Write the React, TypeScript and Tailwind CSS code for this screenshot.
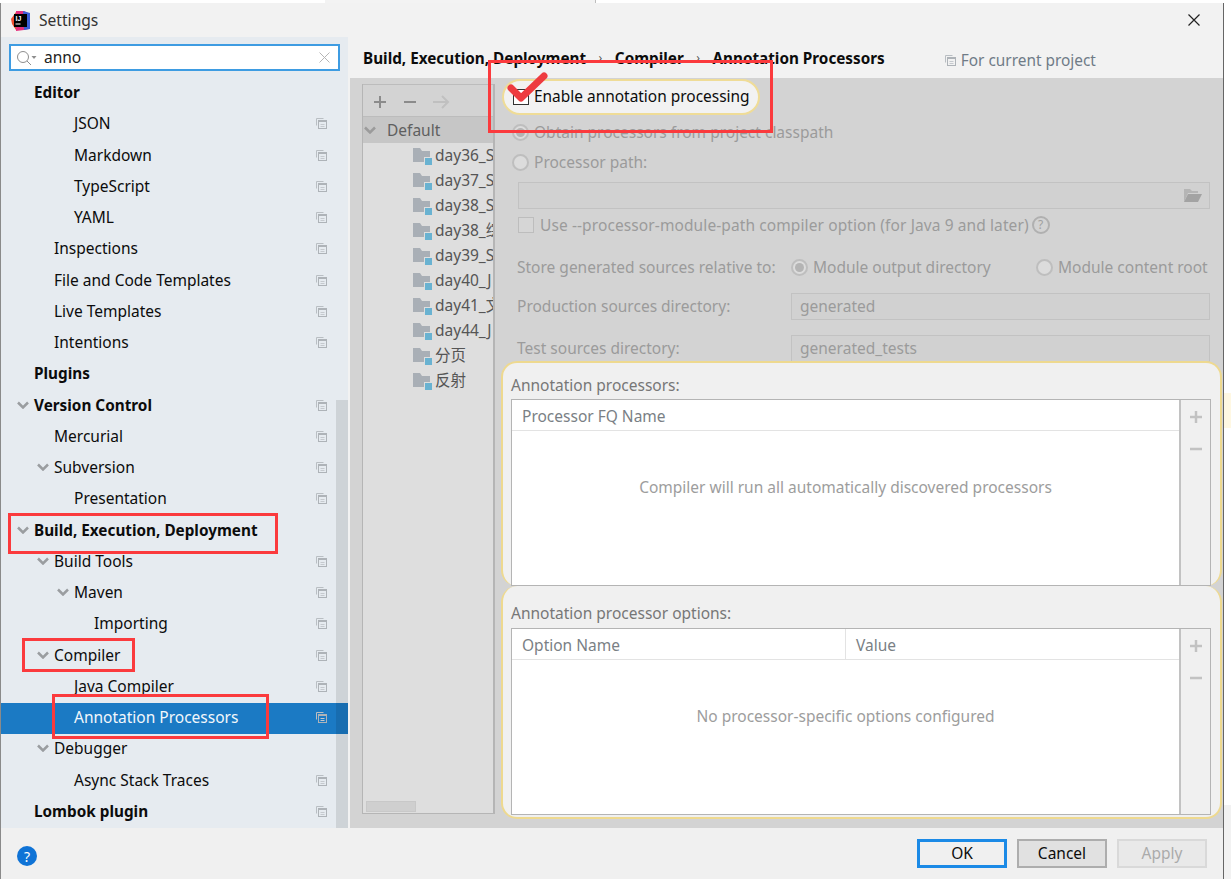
import React from "react";

const font = { fontFamily: '"Noto Sans", "Noto Sans CJK SC", sans-serif' };

function ProjectIcon({ className = "" }: { className?: string }) {
  return (
    <svg width="11" height="11" viewBox="0 0 11 11" className={className} fill="none">
      <path d="M0.5 7.5V0.5H7.5" stroke="#b9bec3" />
      <rect x="2.5" y="2.5" width="8" height="8" stroke="#aeb3b8" />
      <path d="M2.5 3h8" stroke="#aeb3b8" strokeWidth="2" />
      <path d="M4.5 6.5h4M4.5 8.5h4" stroke="#c5c9ce" />
    </svg>
  );
}

function Chevron({ color = "#9a9da0" }: { color?: string }) {
  return (
    <svg width="12" height="8" viewBox="0 0 12 8" fill="none">
      <path d="M1 1.5L6 6.5L11 1.5" stroke={color} strokeWidth="2.5" />
    </svg>
  );
}

type Row = { t: string; l: 0 | 1 | 2 | 3; open?: boolean; bold?: boolean; icon?: boolean; sel?: boolean };

const rows: Row[] = [
  { t: "Editor", l: 0, bold: true },
  { t: "JSON", l: 2, icon: true },
  { t: "Markdown", l: 2, icon: true },
  { t: "TypeScript", l: 2, icon: true },
  { t: "YAML", l: 2, icon: true },
  { t: "Inspections", l: 1, icon: true },
  { t: "File and Code Templates", l: 1, icon: true },
  { t: "Live Templates", l: 1, icon: true },
  { t: "Intentions", l: 1, icon: true },
  { t: "Plugins", l: 0, bold: true },
  { t: "Version Control", l: 0, bold: true, open: true, icon: true },
  { t: "Mercurial", l: 1, icon: true },
  { t: "Subversion", l: 1, open: true, icon: true },
  { t: "Presentation", l: 2, icon: true },
  { t: "Build, Execution, Deployment", l: 0, bold: true, open: true },
  { t: "Build Tools", l: 1, open: true, icon: true },
  { t: "Maven", l: 2, open: true, icon: true },
  { t: "Importing", l: 3, icon: true },
  { t: "Compiler", l: 1, open: true, icon: true },
  { t: "Java Compiler", l: 2, icon: true },
  { t: "Annotation Processors", l: 2, icon: true, sel: true },
  { t: "Debugger", l: 1, open: true },
  { t: "Async Stack Traces", l: 2, icon: true },
  { t: "Lombok plugin", l: 0, bold: true, icon: true },
];

const indent = { 0: "pl-[16px]", 1: "pl-[36px]", 2: "pl-[56px]", 3: "pl-[76px]" };

function SideRow({ r }: { r: Row }) {
  return (
    <div
      className={`flex h-[31.25px] items-center ${indent[r.l]} ${r.sel ? "bg-[#1b7ac4] text-[#f2f7fb]" : "text-[#0c0c0c]"} ${r.bold ? "text-[15.3px] font-bold" : "text-[15.5px]"}`}
    >
      <span className="flex w-[17px] shrink-0 items-center pb-[3px]">{r.open ? <Chevron /> : null}</span>
      <span className="whitespace-nowrap pb-[2px]">{r.t}</span>
      {r.icon ? <ProjectIcon className="ml-auto mb-[2px] mr-[21px] shrink-0" /> : null}
    </div>
  );
}

function Radio({ on }: { on?: boolean }) {
  return (
    <span className="flex h-[17px] w-[17px] shrink-0 items-center justify-center rounded-full border-2 border-[#bebebe] bg-[#dcdcdc]">
      {on ? <span className="h-[9px] w-[9px] rounded-full bg-[#b4b4b4]" /> : null}
    </span>
  );
}

function TreeFolder({ t }: { t: string }) {
  return (
    <div className="flex h-[25px] items-center pl-[50px] text-[15.5px] text-[#555555] whitespace-nowrap">
      <svg width="19" height="18" viewBox="0 0 19 18" className="mr-[3px] shrink-0">
        <path d="M0 1h7l2 3h8v11H0z" fill="#a9afb6" />
        <rect x="11" y="10" width="8" height="8" fill="#dedede" />
        <rect x="12" y="11" width="7" height="7" fill="#69b2d1" />
      </svg>
      <span>{t}</span>
    </div>
  );
}

function PlusMinus() {
  const c = "#c2c2c2";
  return (
    <div className="flex w-[31px] shrink-0 flex-col items-center border-l-2 border-[#c2c2c2] bg-[#f0f0f0] pt-[10px]">
      <svg width="14" height="14" viewBox="0 0 14 14">
        <path d="M7 1v12M1 7h12" stroke={c} strokeWidth="2.5" />
      </svg>
      <svg width="14" height="14" viewBox="0 0 14 14" className="mt-[18px]">
        <path d="M1 7h12" stroke={c} strokeWidth="2.5" />
      </svg>
    </div>
  );
}

function Panel({ children, label, tall }: { children: React.ReactNode; label: string; tall?: boolean }) {
  return (
    <div
      className={`ml-[6px] flex w-[721px] shrink-0 flex-col bg-[#f0f0f0] border-[#eed98f] rounded-[16px] pl-[8px] pr-[9px] ${tall ? "h-[233px] border-x-2 border-b-2 pb-[2px]" : "relative z-10 h-[225px] border-x-2 border-t-2"}`}
    >
      <div className={`flex shrink-0 items-center text-[15.5px] text-[#777777] ${tall ? "h-[42px] pt-[14px]" : "h-[36px] pt-[10px]"}`}>{label}</div>
      <div className="flex min-h-0 flex-1 border border-[#b4b4b4] bg-white">{children}</div>
    </div>
  );
}

function RedBox({ className }: { className: string }) {
  return <div className={`pointer-events-none absolute z-30 border-[3px] border-[#fb3a3d] ${className}`} />;
}

export default function App() {
  return (
    <div className="relative h-[879px] w-[1231px] overflow-hidden bg-white" style={font}>
      <div className="absolute left-[325px] top-0 h-[3px] w-[271px] border-r border-[#bdbdbd] bg-[#f3f3f3]" />
      <div className="absolute left-[1224px] top-[393px] h-[35px] w-[7px] bg-[#fff8e3]" />
      <div className="absolute left-[1224px] top-[805px] h-[74px] w-[7px] bg-[#f2f2f2]" />
      <div className="mt-[3px] flex h-[876px] w-[1224px] flex-col border-x border-l-[#8a8a8a] border-r-[#666666] bg-[#f2f2f2]">
        {/* Title bar */}
        <div className="flex h-[34px] shrink-0 items-center">
          <svg width="21" height="21" viewBox="0 0 21 21" className="ml-[9px]">
            <path d="M1 9L6 2h5l-1 18H6L2 14z" fill="#f0502e" />
            <path d="M6 1h8l6 3-1 15-5 1-8 1z" fill="#e52f7c" />
            <path d="M13 1l7 2 0 16-6 1z" fill="#3b5fd9" />
            <rect x="4" y="4" width="13" height="13" fill="#000" />
            <text x="5.5" y="11" fontSize="7" fontWeight="700" fill="#fff" fontFamily="Liberation Sans">
              IJ
            </text>
            <rect x="5.5" y="13.5" width="5" height="1" fill="#fff" />
          </svg>
          <span className="ml-[8px] pt-[1px] text-[15.6px] text-[#333333]">Settings</span>
          <svg width="12" height="12" viewBox="0 0 12 12" className="ml-auto mr-[23px]">
            <path d="M0.5 0.5L11.5 11.5M11.5 0.5L0.5 11.5" stroke="#222" strokeWidth="1.2" />
          </svg>
        </div>

        <div className="flex min-h-0 flex-1">
          {/* Sidebar */}
          <div className="relative flex w-[347px] shrink-0 flex-col bg-[#e6ebf0]">
            <div className="mx-[8px] mt-[7px] flex h-[27px] shrink-0 items-center border-2 border-[#3e9ce2] bg-white">
              <svg width="22" height="16" viewBox="0 0 22 16" className="ml-[5px]" fill="none">
                <circle cx="7" cy="7" r="5.5" stroke="#8e8e8e" />
                <path d="M11 11l4 4" stroke="#8e8e8e" />
                <path d="M15.5 6h5l-2.5 3z" fill="#8e8e8e" />
              </svg>
              <span className="ml-[6px] text-[15.5px] text-[#222222]">anno</span>
              <svg width="11" height="11" viewBox="0 0 11 11" className="ml-auto mr-[8px]">
                <path d="M0.5 0.5L10.5 10.5M10.5 0.5L0.5 10.5" stroke="#b5b5b5" />
              </svg>
            </div>
            <div className="mt-[7px]">
              {rows.map((r) => (
                <SideRow key={r.t} r={r} />
              ))}
            </div>
            <div className="absolute bottom-0 right-0 top-[363px] w-[12px] bg-black/10" />
          </div>

          {/* Main */}
          <div className="ml-[2px] flex min-w-0 flex-1 flex-col">
            <div className="flex h-[41px] shrink-0 items-center">
              <span className="ml-[13px] flex items-center pt-[1px] text-[15.28px] font-bold text-[#0c0c0c]">
                <span>Build, Execution, Deployment</span>
                <span className="mx-[12.5px] text-[12px] font-normal text-[#555555]">›</span>
                <span>Compiler</span>
                <span className="mx-[12.5px] text-[12px] font-normal text-[#555555]">›</span>
                <span>Annotation Processors</span>
              </span>
              <ProjectIcon className="ml-[60px] mt-[6px]" />
              <span className="ml-[5px] mt-[7px] text-[15.4px] text-[#6f7b87]">For current project</span>
            </div>

            <div className="flex min-h-0 flex-1 bg-[#d3d3d3]">
              {/* Tree */}
              <div className="ml-[12px] mt-[6px] mb-[14px] flex w-[133px] shrink-0 flex-col overflow-hidden border-l border-b border-[#b5b5b5] border-r-2 bg-[#dedede]">
                <div className="flex h-[33px] shrink-0 items-center gap-[16px] border-y border-[#bcbcbc] bg-[#d3d3d3] pl-[10px] pt-[2px]">
                  <svg width="14" height="14" viewBox="0 0 14 14">
                    <path d="M7 1v12M1 7h12" stroke="#8b8b8b" strokeWidth="2" />
                  </svg>
                  <svg width="14" height="14" viewBox="0 0 14 14">
                    <path d="M1 7h12" stroke="#8b8b8b" strokeWidth="2" />
                  </svg>
                  <svg width="17" height="14" viewBox="0 0 17 14" fill="none">
                    <path d="M0 7h15M9 1l6 6-6 6" stroke="#c0c0c0" strokeWidth="2" />
                  </svg>
                </div>
                <div className="flex h-[26px] shrink-0 items-center bg-[#c6c6c6] pl-[1px] text-[15.5px] text-[#5f5f5f]">
                  <Chevron color="#9b9b9b" />
                  <span className="ml-[11px] pt-[2px]">Default</span>
                </div>
                {["day36_S", "day37_S", "day38_S", "day38_综", "day39_S", "day40_J", "day41_文", "day44_J", "分页", "反射"].map((t) => (
                  <TreeFolder key={t} t={t} />
                ))}
                <div className="mt-auto mb-[1px] ml-[3px] h-[11px] w-[50px] shrink-0 border border-[#c8c8c8] bg-[#cfcfcf]" />
              </div>

              {/* Form */}
              <div className="relative flex min-w-0 flex-1 flex-col text-[15.5px] text-[#9b9b9b]">
                <div className="ml-[7px] mt-[1px] flex h-[36px] w-[258px] shrink-0 items-center rounded-full border-2 border-[#efdc97] bg-[#f2f2f2] pl-[9px] text-[#0c0c0c]">
                  <span className="h-[16px] w-[16px] shrink-0 border border-[#333333] bg-white" />
                  <span className="ml-[5px] whitespace-nowrap text-[15.45px]">Enable annotation processing</span>
                </div>
                <div className="ml-[17px] mt-[5px] flex h-[24px] shrink-0 items-center">
                  <Radio on />
                  <span className="ml-[5px] pt-[2px]">Obtain processors from project classpath</span>
                </div>
                <div className="ml-[17px] mt-[6px] flex h-[24px] shrink-0 items-center">
                  <Radio />
                  <span className="ml-[5px] pt-[2px]">Processor path:</span>
                </div>
                <div className="ml-[23px] mr-[13px] mt-[8px] flex h-[27px] shrink-0 items-center justify-end border border-[#c2c2c2] bg-[#d1d1d1] pr-[7px]">
                  <svg width="19" height="15" viewBox="0 0 19 15">
                    <path d="M1 14V1h6l2 2h6v2H5L1 14z" fill="#b5b5b5" />
                    <path d="M5 6h14l-4 8H1z" fill="#a3a3a3" />
                  </svg>
                </div>
                <div className="ml-[23px] mt-[4px] flex h-[24px] shrink-0 items-center">
                  <span className="h-[16px] w-[16px] shrink-0 border border-[#bdbdbd] bg-[#d6d6d6]" />
                  <span className="ml-[6px] whitespace-nowrap pt-[2px] tracking-[0.1px]">Use --processor-module-path compiler option (for Java 9 and later)</span>
                  <span className="ml-[3px] flex h-[18px] w-[18px] items-center justify-center rounded-full border-2 border-[#b0b0b0] text-[12px] leading-none text-[#a0a0a0]">?</span>
                </div>
                <div className="ml-[22px] mt-[18px] flex h-[24px] shrink-0 items-center whitespace-nowrap">
                  <span className="w-[274px] shrink-0 pt-[2px]">Store generated sources relative to:</span>
                  <Radio on />
                  <span className="ml-[5px] w-[223px] shrink-0 pt-[2px]">Module output directory</span>
                  <Radio />
                  <span className="ml-[5px] pt-[2px]">Module content root</span>
                </div>
                <div className="ml-[22px] mr-[13px] mt-[14px] flex h-[27px] shrink-0 items-center">
                  <span className="w-[274px] shrink-0">Production sources directory:</span>
                  <span className="flex h-full flex-1 items-center border border-[#c2c2c2] bg-[#d1d1d1] pl-[8px]">generated</span>
                </div>
                <div className="ml-[22px] mr-[13px] mt-[15px] flex h-[27px] shrink-0 items-center">
                  <span className="w-[274px] shrink-0">Test sources directory:</span>
                  <span className="flex h-full flex-1 items-center border border-[#c2c2c2] bg-[#d1d1d1] pl-[8px]">generated_tests</span>
                </div>

                <div className="-mt-[1px]" />
                <Panel label="Annotation processors:">
                  <div className="flex min-w-0 flex-1 flex-col">
                    <div className="flex h-[31px] shrink-0 items-center border-b border-[#e3e3e3] pl-[10px] pt-[4px] text-[#7a7f85]">Processor FQ Name</div>
                    <div className="flex flex-1 items-center justify-center pb-[40px] text-[#9d9d9d]">Compiler will run all automatically discovered processors</div>
                  </div>
                  <PlusMinus />
                </Panel>
                <Panel label="Annotation processor options:" tall>
                  <div className="flex min-w-0 flex-1 flex-col">
                    <div className="flex h-[31px] shrink-0 items-center border-b border-[#e3e3e3] text-[#7a7f85]">
                      <span className="flex h-full w-[334px] items-center border-r border-[#e3e3e3] pl-[10px] pt-[4px]">Option Name</span>
                      <span className="pl-[10px] pt-[4px]">Value</span>
                    </div>
                    <div className="flex flex-1 items-center justify-center pb-[40px] text-[#9d9d9d]">No processor-specific options configured</div>
                  </div>
                  <PlusMinus />
                </Panel>
              </div>
            </div>
          </div>
        </div>

        {/* Footer */}
        <div className="flex h-[51px] shrink-0 items-center bg-[#f0f0f0] text-[15.5px]">
          <span className="ml-[16px] mt-[5px] flex h-[20px] w-[20px] items-center justify-center rounded-full bg-[#0f73d6] text-[14px] text-white">?</span>
          <span className="ml-auto flex h-[29px] w-[90px] items-center justify-center border-[3px] border-[#1b8ae6] text-[#0c0c0c]">OK</span>
          <span className="ml-[10px] flex h-[29px] w-[90px] items-center justify-center border-2 border-[#adadad] bg-[#e1e1e1] text-[#0c0c0c]">Cancel</span>
          <span className="ml-[10px] mr-[16px] flex h-[29px] w-[90px] items-center justify-center border-2 border-[#d9d9d9] bg-[#e9e9e9] text-[#ababab]">Apply</span>
        </div>
      </div>

      <RedBox className="left-[488px] top-[60px] h-[73px] w-[285px]" />
      <RedBox className="left-[8px] top-[513px] h-[41px] w-[270px]" />
      <RedBox className="left-[22px] top-[638px] h-[34px] w-[113px]" />
      <RedBox className="left-[52px] top-[694px] h-[45px] w-[217px]" />
      <svg width="42" height="34" viewBox="0 0 42 34" className="absolute left-[506px] top-[70px] z-40" fill="none">
        <path d="M5 18L15 28L38 6" stroke="#ee3b3f" strokeWidth="7" strokeLinecap="round" strokeLinejoin="round" />
      </svg>
    </div>
  );
}
